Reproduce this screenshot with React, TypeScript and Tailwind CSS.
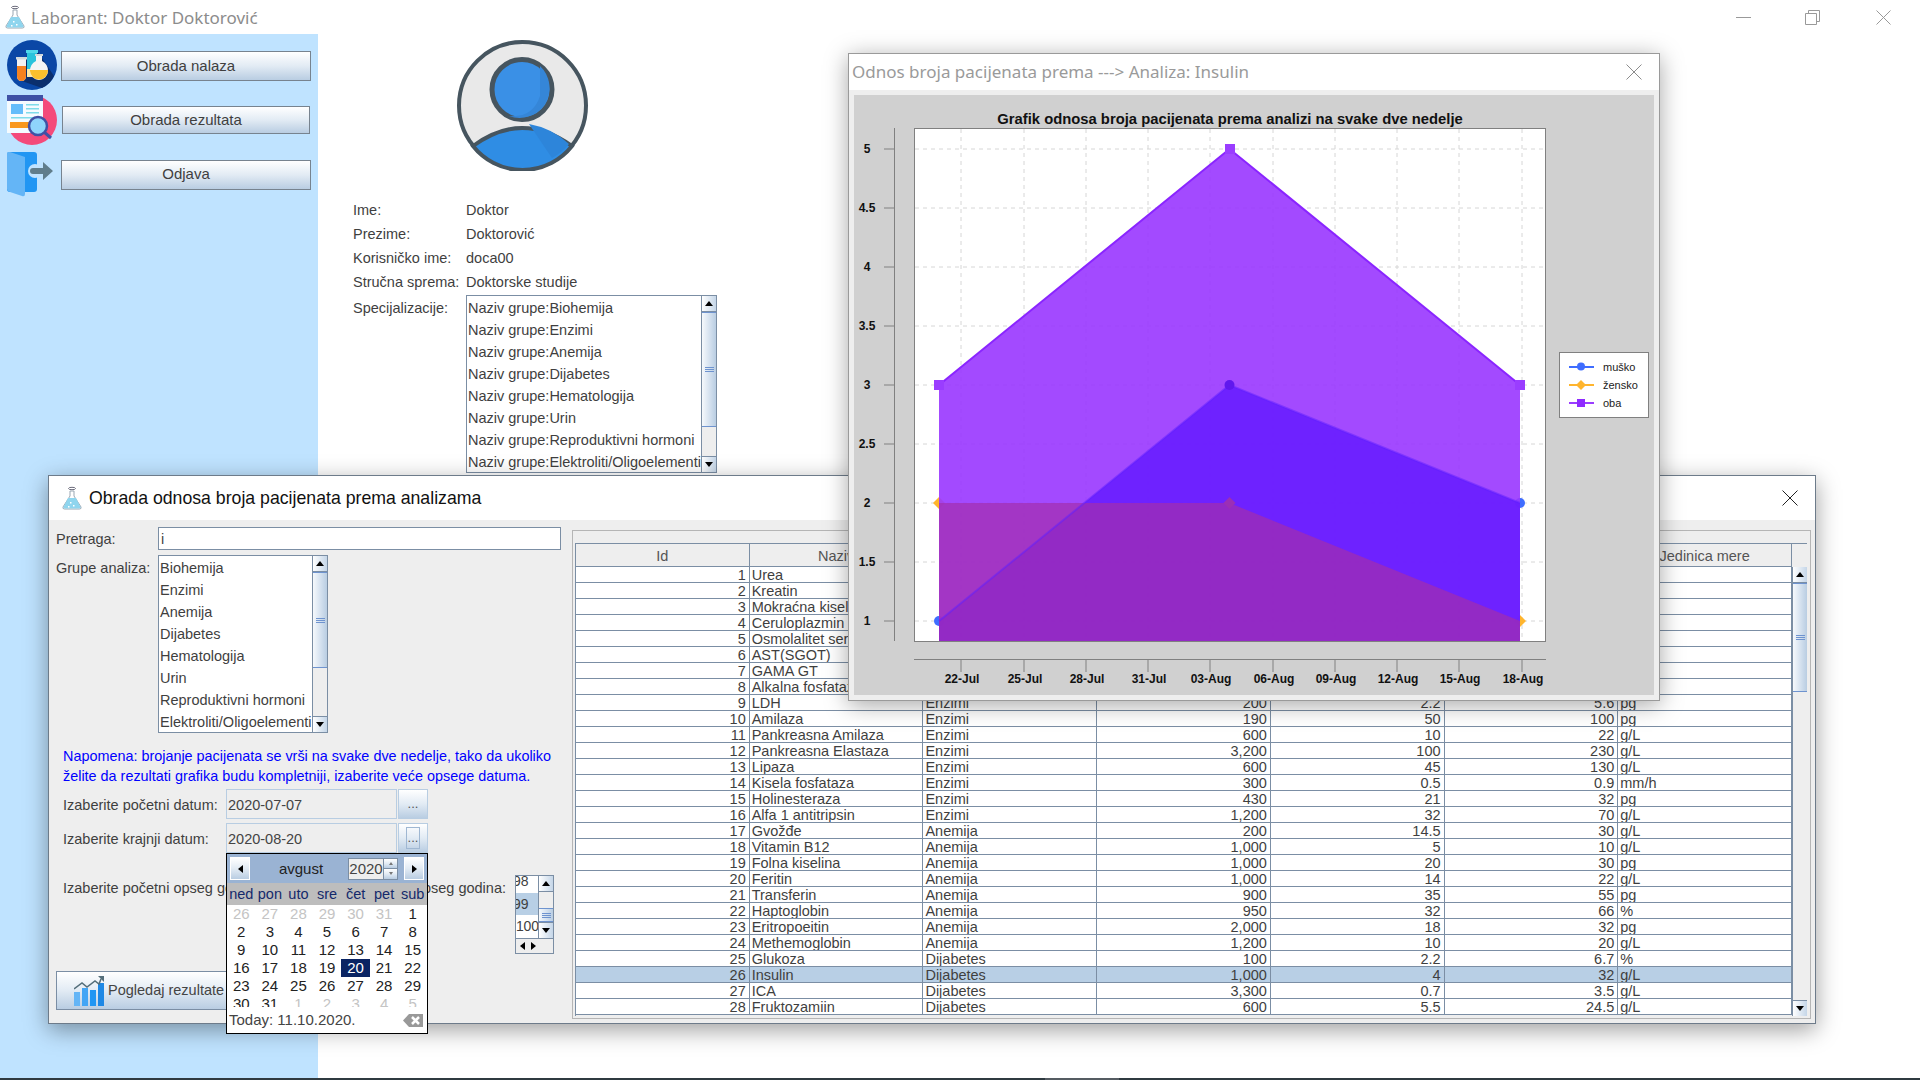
import React from "react"

const LINE = "border-[#7b8ea4]"
const BTN = "bg-gradient-to-b from-white via-[#e2ebf4] to-[#b9cde2]"

const FlaskIcon = () => (
  <svg width="20" height="24" viewBox="0 0 20 24" className="shrink-0">
    <ellipse cx="10" cy="2.5" rx="3.5" ry="1.2" fill="none" stroke="#6b6b7b" strokeWidth="1" />
    <path d="M8 5h4v5l7 11q.5 2-1.5 2h-15q-2 0-1.5-2l7-11z" fill="#fff" stroke="#9aa7b3" strokeWidth="1" />
    <path d="M6 12h8l4.500 9q.3 1.500-1 1.500h-15q-1.300 0-1-1.500z" fill="#8fd5ee" />
    <rect x="8" y="16" width="1.500" height="1.500" fill="#fff" />
    <rect x="11" y="19" width="1.500" height="1.500" fill="#fff" />
    <rect x="6" y="20" width="1.500" height="1.500" fill="#fff" />
  </svg>
)

const LabIcon = () => (
  <svg width="50" height="50" viewBox="0 0 50 50" className="shrink-0">
    <circle cx="25" cy="25" r="25" fill="#0a47a6" />
    <path d="M21 12l10 0 16 24a25 25 0 0 1-12 12L12 40z" fill="#0b2f6d" />
    <rect x="20" y="11" width="10" height="26" fill="#ffe9a6" />
    <rect x="20" y="11" width="10" height="18" fill="#29c3dc" />
    <rect x="19" y="10" width="12" height="3" fill="#4fd8ea" />
    <path d="M10 18h9v18q0 5-4.500 5t-4.500-5z" fill="#f2f2f2" />
    <path d="M10 26h9v10q0 5-4.500 5t-4.500-5z" fill="#f5821f" />
    <rect x="9" y="17" width="11" height="2.500" fill="#cfd8dc" />
    <path d="M29 15h6v6q6 3 6 10a9 9 0 0 1-18 0q0-7 6-10z" fill="#f4f4f4" />
    <path d="M23 30h18a9 9 0 0 1-18 1z" fill="#fbc02d" />
    <rect x="28" y="14" width="8" height="2" fill="#cfd8dc" />
  </svg>
)

const ReportIcon = () => (
  <svg width="50" height="50" viewBox="0 0 50 50" className="shrink-0">
    <circle cx="25" cy="25" r="25" fill="#f44a7a" />
    <rect x="0" y="0" width="36" height="38" fill="#f5fbff" />
    <rect x="0" y="0" width="36" height="6" fill="#3f51a5" />
    <rect x="4" y="9" width="12" height="10" fill="#64bdfb" />
    <path d="M19 9h13v1.500h-13zM19 13h13v1.500h-13zM19 17h13v1.500h-13zM4 22h28v1.500h-28z" fill="#7fdcea" />
    <rect x="3" y="27" width="19" height="6" fill="#f9971e" />
    <path d="M37 37l7 6" stroke="#3f51a5" strokeWidth="3" />
    <circle cx="31" cy="31" r="9" fill="#8fd4fb" stroke="#3f51a5" strokeWidth="2.500" />
  </svg>
)

const LogoutIcon = () => (
  <svg width="50" height="45" viewBox="0 0 50 45" className="shrink-0">
    <rect x="0" y="0" width="30" height="40" rx="3" fill="#2196f3" />
    <path d="M0 2q0-3 3-2l15 5v37q0 3-3 2l-12-4q-3-1-3-3z" fill="#64b5f6" />
    <circle cx="28" cy="19" r="7" fill="#bfe3ff" />
    <path d="M26 16h10v-6l10 9-10 9v-6h-10a3 3 0 0 1 0-6z" fill="#607d8b" />
  </svg>
)

const ChartIcon = () => (
  <svg width="30" height="31" viewBox="0 0 30 31" className="shrink-0">
    <rect x="0" y="17" width="6" height="14" fill="#64b5f6" />
    <rect x="8" y="13" width="6" height="18" fill="#42a5f5" />
    <rect x="16" y="15" width="6" height="16" fill="#2196f3" />
    <rect x="24" y="8" width="6" height="23" fill="#1e88e5" />
    <path d="M0 14l8-6 5 4 8-6 4 3 2-5" fill="none" stroke="#546e7a" strokeWidth="1.500" />
    <path d="M24 1h6v6z" fill="#546e7a" />
  </svg>
)

const Scrollbar = ({ thumbTop, thumbH }: { thumbTop: number; thumbH: number }) => (
  <div className={`flex flex-col h-full shrink-0 w-[15px] bg-[#eeeeee] border-l ${LINE}`}>
    <div className="h-[16px] shrink-0 flex items-center justify-center bg-gradient-to-r from-white to-[#c5d6e8] border-b border-[#7b8ea4]">
      <div className="w-0 h-0 border-x-[4px] border-x-transparent border-b-[5px] border-b-black" />
    </div>
    <div className="relative flex-1">
      <div
        className="absolute inset-x-0 flex flex-col items-center justify-center gap-[1px] bg-gradient-to-r from-[#f6f9fc] via-[#d7e3f0] to-[#b9cde2] border-y border-[#6e93cf]"
        style={{ top: thumbTop, height: thumbH }}
      >
        <div className="w-[9px] h-[1px] bg-[#6e93cf]" />
        <div className="w-[9px] h-[1px] bg-[#6e93cf]" />
        <div className="w-[9px] h-[1px] bg-[#6e93cf]" />
      </div>
    </div>
    <div className="h-[16px] shrink-0 flex items-center justify-center bg-gradient-to-r from-white to-[#c5d6e8] border-t border-[#7b8ea4]">
      <div className="w-0 h-0 border-x-[4px] border-x-transparent border-t-[5px] border-t-black" />
    </div>
  </div>
)

const ListBox = ({ items, className, thumbTop, thumbH }: { items: string[]; className: string; thumbTop: number; thumbH: number }) => (
  <div className={`flex border ${LINE} bg-white overflow-hidden ${className}`}>
    <div className="flex-1 min-w-0 overflow-hidden pl-[1px] pt-[1px]">
      {items.map((item) => (
        <div key={item} className="h-[22px] leading-[22px] whitespace-nowrap">
          {item}
        </div>
      ))}
    </div>
    <Scrollbar thumbTop={thumbTop} thumbH={thumbH} />
  </div>
)

const SideButton = ({ label, className }: { label: string; className: string }) => (
  <button className={`border border-[#77838f] ${BTN} text-[#3f3f3f] text-[15px] ${className}`}>{label}</button>
)

const groups = ["Biohemija", "Enzimi", "Anemija", "Dijabetes", "Hematologija", "Urin", "Reproduktivni hormoni", "Elektroliti/Oligoelementi"]

const Profile = () => (
  <div className="pl-[35px] pt-[6px]">
    <svg width="131" height="131" viewBox="0 0 131 131" className="ml-[104px]">
      <circle cx="65.500" cy="65.500" r="63.500" fill="#e9e9e9" stroke="#46555f" strokeWidth="4" />
      <path d="M16 106Q65 70 115 106A63 63 0 0 1 16 106Z" fill="#2f8de4" stroke="#46555f" strokeWidth="4" />
      <path d="M72 84Q95 88 112 104 A62 62 0 0 1 95 118z" fill="#2d85da" />
      <circle cx="65" cy="49.500" r="30" fill="#3a90e6" stroke="#46555f" strokeWidth="5" />
      <path d="M83 26a30 30 0 0 1-31 50q24 2 31-20z" fill="#3586d8" />
    </svg>
    <div className="mt-[27px] text-[14.5px] text-[#3f3f3f]">
      {[
        ["Ime:", "Doktor"],
        ["Prezime:", "Doktorović"],
        ["Korisničko ime:", "doca00"],
        ["Stručna sprema:", "Doktorske studije"],
      ].map(([label, value]) => (
        <div key={label} className="flex h-[24px] leading-[24px]">
          <span className="w-[113px] whitespace-nowrap">{label}</span>
          <span>{value}</span>
        </div>
      ))}
      <div className="flex mt-[1px]">
        <span className="w-[113px] pt-[2px] leading-[22px]">Specijalizacije:</span>
        <ListBox
          items={groups.map((g) => "Naziv grupe:" + g)}
          className="w-[251px] h-[178px]"
          thumbTop={0}
          thumbH={115}
        />
      </div>
    </div>
  </div>
)

const weekdays = ["ned", "pon", "uto", "sre", "čet", "pet", "sub"]
const days: [string, boolean][] = [
  ...["26", "27", "28", "29", "30", "31"].map((d): [string, boolean] => [d, true]),
  ...Array.from({ length: 31 }, (_, i): [string, boolean] => [String(i + 1), false]),
  ...["1", "2", "3", "4", "5"].map((d): [string, boolean] => [d, true]),
]

const Calendar = () => (
  <div className="absolute left-[177px] top-[333px] w-[202px] h-[181px] border border-black bg-white text-[15px] flex flex-col z-10">
    <div className="h-[29px] shrink-0 bg-[#9ab3d3] flex items-center pl-[3px] pr-[3px]">
      <div className={`w-[20px] h-[23px] flex items-center justify-center border border-white ${BTN}`}>
        <div className="w-0 h-0 border-y-[4px] border-y-transparent border-r-[5px] border-r-black" />
      </div>
      <div className="flex-1 text-center text-[#222] pl-[4px] pt-[1px]">avgust</div>
      <div className="w-[35px] h-[22px] border border-[#7b8ea4] bg-[#eeeeee] text-[#444] text-center leading-[20px] border-r-0">2020</div>
      <div className="w-[15px] h-[22px] flex flex-col border border-[#7b8ea4] mr-[6px]">
        <div className={`flex-1 flex items-center justify-center ${BTN} border-b border-[#7b8ea4]`}>
          <div className="w-0 h-0 border-x-[2px] border-x-transparent border-b-[3px] border-b-[#777]" />
        </div>
        <div className={`flex-1 flex items-center justify-center ${BTN}`}>
          <div className="w-0 h-0 border-x-[2px] border-x-transparent border-t-[3px] border-t-[#777]" />
        </div>
      </div>
      <div className={`w-[20px] h-[23px] flex items-center justify-center border border-white ${BTN}`}>
        <div className="w-0 h-0 border-y-[4px] border-y-transparent border-l-[5px] border-l-black" />
      </div>
    </div>
    <div className="h-[22px] shrink-0 bg-[#bdbdbd] grid grid-cols-7 text-center text-[#14296b] text-[14.5px] leading-[23px]">
      {weekdays.map((w) => (
        <span key={w}>{w}</span>
      ))}
    </div>
    <div className="h-[102px] shrink-0 overflow-hidden grid grid-cols-7 auto-rows-[18px] text-center leading-[18px]">
      {days.map(([d, muted], i) => (
        <span
          key={i}
          className={d === "20" ? "bg-[#0a2463] text-white" : muted ? "text-[#c4c4c4]" : "text-[#222]"}
        >
          {d}
        </span>
      ))}
    </div>
    <div className="flex-1 flex items-center justify-between pl-[2px] pr-[4px] text-[#444]">
      <span>Today: 11.10.2020.</span>
      <svg width="20" height="13" viewBox="0 0 20 13">
        <path d="M0 6.500L6 0h14v13H6z" fill="#999" />
        <path d="M9 3l7 7M16 3l-7 7" stroke="#fff" strokeWidth="2.500" />
      </svg>
    </div>
  </div>
)

const DateRow = ({ label, value, focused, className }: { label: string; value: string; focused?: boolean; className: string }) => (
  <div className={`flex h-[30px] items-center ${className}`}>
    <span className="w-[163px] whitespace-nowrap pt-[4px]">{label}</span>
    <div className="w-[171px] h-full border border-[#b8cde2] pl-[1px] leading-[30px] text-[#444]">{value}</div>
    <div className={`ml-[1px] w-[30px] h-full flex items-center justify-center border border-[#b8cde2] ${BTN} text-[#555] text-[13px] leading-[24px]`}>
      {focused ? <div className="w-[14px] h-[22px] border border-[#9fb7d2] text-center leading-[20px]">...</div> : "..."}
    </div>
  </div>
)

const ObradaForm = () => (
  <div className="w-[523px] shrink-0 pt-[7px] text-[14.5px] text-[#3f3f3f]">
    <div className="flex pl-[7px] h-[23px] items-center">
      <span className="w-[102px] pt-[2px]">Pretraga:</span>
      <div className={`w-[403px] h-full bg-white border ${LINE} pl-[2px] leading-[23px]`}>i</div>
    </div>
    <div className="flex pl-[7px] mt-[5px]">
      <span className="w-[102px] leading-[27px]">Grupe analiza:</span>
      <ListBox items={groups} className="w-[170px] h-[178px]" thumbTop={0} thumbH={96} />
    </div>
    <p className="pl-[14px] mt-[13px] text-[#0000ff] leading-[20px] whitespace-nowrap text-[14.4px]">
      Napomena: brojanje pacijenata se vrši na svake dve nedelje, tako da ukoliko
      <br />
      želite da rezultati grafika budu kompletniji, izaberite veće opsege datuma.
    </p>
    <div className="pl-[14px]">
      <DateRow className="mt-[3px]" label="Izaberite početni datum:" value="2020-07-07" />
      <DateRow className="mt-[4px]" label="Izaberite krajnji datum:" value="2020-08-20" focused />
      <div className="flex mt-[22px] h-[79px] w-[491px]">
        <span className="leading-[26px] whitespace-nowrap">Izaberite početni opseg godina:</span>
        <span className="ml-auto mr-[9px] leading-[26px] whitespace-nowrap">Izaberite krajnji opseg godina:</span>
        <div className={`w-[39px] h-full border ${LINE} bg-white flex flex-col`}>
          <div className="flex-1 flex min-h-0">
            <div className="flex-1 overflow-hidden text-[14px]">
              <div className="h-[17px] leading-[11px] -ml-[3px]">98</div>
              <div className="h-[22px] leading-[22px] bg-[#b8cfe5] -ml-[3px]">99</div>
              <div className="h-[22px] leading-[22px] -tracking-[0.2px]">100</div>
            </div>
            <Scrollbar thumbTop={16} thumbH={14} />
          </div>
          <div className={`h-[15px] shrink-0 border-t ${LINE} flex items-center bg-[#eeeeee]`}>
            <div className="w-[11px] flex justify-center ml-[1px]">
              <div className="w-0 h-0 border-y-[4px] border-y-transparent border-r-[5px] border-r-black" />
            </div>
            <div className="w-[11px] flex justify-center">
              <div className="w-0 h-0 border-y-[4px] border-y-transparent border-l-[5px] border-l-black" />
            </div>
          </div>
        </div>
      </div>
    </div>
    <div className="pl-[7px] mt-[17px]">
      <button className={`w-[190px] h-[39px] flex items-center gap-[4px] pl-[17px] border ${LINE} ${BTN} text-[#444] whitespace-nowrap`}>
        <ChartIcon />
        Pogledaj rezultate
      </button>
    </div>
  </div>
)

type Row = [string, string, string, string, string, string]
const rows: Row[] = [
  ["Urea", "", "", "", "", ""],
  ["Kreatin", "", "", "", "", ""],
  ["Mokraćna kiselina", "", "", "", "", ""],
  ["Ceruloplazmin", "", "", "", "", ""],
  ["Osmolalitet seruma", "", "", "", "", ""],
  ["AST(SGOT)", "", "", "", "", ""],
  ["GAMA GT", "", "", "", "", ""],
  ["Alkalna fosfataza", "", "", "", "", ""],
  ["LDH", "Enzimi", "200", "2.2", "5.6", "pg"],
  ["Amilaza", "Enzimi", "190", "50", "100", "pg"],
  ["Pankreasna Amilaza", "Enzimi", "600", "10", "22", "g/L"],
  ["Pankreasna Elastaza", "Enzimi", "3,200", "100", "230", "g/L"],
  ["Lipaza", "Enzimi", "600", "45", "130", "g/L"],
  ["Kisela fosfataza", "Enzimi", "300", "0.5", "0.9", "mm/h"],
  ["Holinesteraza", "Enzimi", "430", "21", "32", "pg"],
  ["Alfa 1 antitripsin", "Enzimi", "1,200", "32", "70", "g/L"],
  ["Gvožđe", "Anemija", "200", "14.5", "30", "g/L"],
  ["Vitamin B12", "Anemija", "1,000", "5", "10", "g/L"],
  ["Folna kiselina", "Anemija", "1,000", "20", "30", "pg"],
  ["Feritin", "Anemija", "1,000", "14", "22", "g/L"],
  ["Transferin", "Anemija", "900", "35", "55", "pg"],
  ["Haptoglobin", "Anemija", "950", "32", "66", "%"],
  ["Eritropoeitin", "Anemija", "2,000", "18", "32", "pg"],
  ["Methemoglobin", "Anemija", "1,200", "10", "20", "g/L"],
  ["Glukoza", "Dijabetes", "100", "2.2", "6.7", "%"],
  ["Insulin", "Dijabetes", "1,000", "4", "32", "g/L"],
  ["ICA", "Dijabetes", "3,300", "0.7", "3.5", "g/L"],
  ["Fruktozamiin", "Dijabetes", "600", "5.5", "24.5", "g/L"],
]

const headers = ["Id", "Naziv", "Grupa", "Cena", "Min", "Max", "Jedinica mere"]
const leftAligned = [1, 2, 6]

const AnalysisTable = () => (
  <div className="mt-[10px] w-[1239px] h-[489px] border border-[#b5b5b5] pl-[2px] pt-[12px] text-[14.5px] text-[#3f3f3f]">
    <div className={`flex w-[1232px] h-[473px] border-l ${LINE}`}>
      <div className="w-[1216px] shrink-0">
        <div className={`grid grid-cols-7 h-[24px] border-y ${LINE} bg-[#eeeeee]`}>
          {headers.map((h) => (
            <div key={h} className={`text-center leading-[24px] border-r ${LINE} text-[#555]`}>
              {h}
            </div>
          ))}
        </div>
        {rows.map((row, i) => (
          <div
            key={i}
            className={`grid grid-cols-7 h-[16px] border-b ${LINE} ${i === 25 ? "bg-[#b8cfe5]" : "bg-white"}`}
          >
            {[String(i + 1), ...row].map((cell, c) => (
              <div
                key={c}
                className={`h-[15px] overflow-hidden whitespace-nowrap leading-[16px] border-r ${LINE} ${
                  leftAligned.includes(c) ? "pl-[2px]" : "text-right pr-[3px]"
                }`}
              >
                {cell}
              </div>
            ))}
          </div>
        ))}
      </div>
      <div className={`w-[15px] h-[473px] flex flex-col border-t ${LINE}`}>
        <div className="h-[23px] shrink-0 bg-[#eeeeee]" />
        <div className="flex-1 min-h-0">
          <Scrollbar thumbTop={0} thumbH={109} />
        </div>
      </div>
    </div>
  </div>
)

const yTicks: [string, number][] = [
  ["5", 149], ["4.5", 208], ["4", 267], ["3.5", 326], ["3", 385], ["2.5", 444], ["2", 503], ["1.5", 562], ["1", 621],
]
const xTicks: [string, number][] = [
  ["22-Jul", 961], ["25-Jul", 1024], ["28-Jul", 1086], ["31-Jul", 1148], ["03-Aug", 1210],
  ["06-Aug", 1273], ["09-Aug", 1335], ["12-Aug", 1397], ["15-Aug", 1459], ["18-Aug", 1522],
]

const ChartGraphic = () => (
  <svg width="800" height="600" viewBox="854 95 800 600" className="block font-['Liberation_Sans',sans-serif]">
    <rect x="854" y="95" width="800" height="600" fill="#d0d0d0" />
    <text x="1230" y="124" textAnchor="middle" fontWeight="700" fontSize="14.800" fill="#111">
      Grafik odnosa broja pacijenata prema analizi na svake dve nedelje
    </text>
    <rect x="914.500" y="128.500" width="631" height="513" fill="#fff" stroke="#808080" />
    {yTicks.map(([label, y]) => (
      <g key={label}>
        <line x1="915" x2="1545" y1={y} y2={y} stroke="#d6d6d6" strokeDasharray="4 4" />
        <line x1="884" x2="894" y1={y} y2={y} stroke="#808080" />
        <text x="867" y={y + 4} textAnchor="middle" fontWeight="700" fontSize="12" fill="#111">
          {label}
        </text>
      </g>
    ))}
    {xTicks.map(([label, x]) => (
      <g key={label}>
        <line x1={x} x2={x} y1="129" y2="641" stroke="#d6d6d6" strokeDasharray="4 4" />
        <line x1={x} x2={x} y1="660" y2="672" stroke="#808080" />
        <text x={x + 1} y="683" textAnchor="middle" fontWeight="700" fontSize="12" fill="#111">
          {label}
        </text>
      </g>
    ))}
    <line x1="894.500" x2="894.500" y1="128" y2="641" stroke="#808080" />
    <line x1="914" x2="1546" y1="659.500" y2="659.500" stroke="#808080" />
    <circle cx="939" cy="621" r="5" fill="#3f6dff" />
    <circle cx="1520" cy="503" r="5" fill="#3f6dff" />
    <path d="M939 497l6 6-6 6-6-6z" fill="#ffb52e" />
    <path d="M1520 615l6 6-6 6-6-6z" fill="#ffb52e" />
    <polygon points="939,641 939,385 1229.500,149 1520,385 1520,641" fill="rgb(153,54,255)" fillOpacity="0.9" />
    <polygon points="939,641 939,621 1229.500,385 1520,503 1520,641" fill="rgb(101,27,255)" fillOpacity="0.85" />
    <polygon points="939,641 939,503 1229.500,503 1520,621 1520,641" fill="rgb(163,45,172)" fillOpacity="0.7" />
    <polyline points="939,385 1229.500,149 1520,385" fill="none" stroke="#8a25ff" strokeWidth="2" />
    <polyline points="939,621 1229.500,385 1520,503" fill="none" stroke="#5f1fff" strokeOpacity="0.5" strokeWidth="2" />
    <rect x="934" y="380" width="10" height="10" fill="#9a3dff" />
    <rect x="1225" y="144" width="10" height="10" fill="#9a3dff" />
    <rect x="1515" y="380" width="10" height="10" fill="#9a3dff" />
    <circle cx="1229.500" cy="385" r="5" fill="#6118ee" />
    <path d="M1229.500 497l6 6-6 6-6-6z" fill="#9b2fb5" />
    <rect x="1559.500" y="352.500" width="89" height="65" fill="#fff" stroke="#808080" />
    <line x1="1569" x2="1594" y1="367" y2="367" stroke="#3f6dff" strokeWidth="2" />
    <circle cx="1581" cy="366.500" r="4" fill="#3f6dff" />
    <line x1="1569" x2="1594" y1="385" y2="385" stroke="#ffb52e" strokeWidth="2" />
    <path d="M1581 380l5 5-5 5-5-5z" fill="#ffb52e" />
    <line x1="1569" x2="1594" y1="403" y2="403" stroke="#9a3dff" strokeWidth="2" />
    <rect x="1577" y="399" width="8" height="8" fill="#8f2bff" />
    <g fontSize="11" fill="#222">
      <text x="1603" y="371">muško</text>
      <text x="1603" y="389">žensko</text>
      <text x="1603" y="407">oba</text>
    </g>
  </svg>
)

const ChartWindow = () => (
  <div className="absolute left-[848px] top-[53px] w-[812px] h-[648px] border border-[#9a9a9a] bg-[#eeeeee] shadow-[0_4px_22px_rgba(0,0,0,0.35)] flex flex-col z-20">
    <div className="h-[36px] shrink-0 bg-white flex items-center pl-[3px] pr-[17px] justify-between">
      <span className="text-[17px] text-[#9a9a9a] font-['Noto_Sans',sans-serif]">Odnos broja pacijenata prema ---&gt; Analiza: Insulin</span>
      <svg width="16" height="16" viewBox="0 0 16 16">
        <path d="M.5.5l15 15M15.500.5l-15 15" stroke="#8c8c8c" />
      </svg>
    </div>
    <div className="pl-[5px] pt-[5px]">
      <ChartGraphic />
    </div>
  </div>
)

const ObradaDialog = () => (
  <div className="absolute left-[48px] top-[475px] w-[1768px] h-[549px] border border-[#6d7b8a] bg-[#eeeeee] shadow-[0_6px_22px_rgba(0,0,0,0.38)] flex flex-col">
    <div className="h-[44px] shrink-0 bg-white flex items-center pl-[13px] pr-[17px] gap-[7px]">
      <FlaskIcon />
      <span className="flex-1 text-[17.7px] text-[#111] pt-[1px]">Obrada odnosa broja pacijenata prema analizama</span>
      <svg width="16" height="16" viewBox="0 0 16 16">
        <path d="M.5.5l15 15M15.500.5l-15 15" stroke="#222" />
      </svg>
    </div>
    <div className="relative flex flex-1 min-h-0">
      <ObradaForm />
      <AnalysisTable />
      <Calendar />
    </div>
  </div>
)

const App = () => {
  return (
    <div className="relative w-[1920px] h-[1080px] overflow-hidden bg-white flex flex-col font-['Liberation_Sans',Arial,sans-serif]">
      <div className="h-[34px] shrink-0 flex items-center pl-[5px] pr-[29px]">
        <FlaskIcon />
        <span className="ml-[6px] flex-1 text-[17px] text-[#8c8c8c] font-['Noto_Sans',sans-serif] pt-[1px]">Laborant: Doktor Doktorović</span>
        <div className="w-[15px] h-[1px] bg-[#999]" />
        <svg width="15" height="15" viewBox="0 0 15 15" className="ml-[54px]">
          <path d="M3.500 3V.5h11v11H12M.5 3.500h11v11H.5z" fill="none" stroke="#999" />
        </svg>
        <svg width="15" height="15" viewBox="0 0 15 15" className="ml-[56px]">
          <path d="M.5.5l14 14M14.500.5l-14 14" stroke="#999" />
        </svg>
      </div>
      <div className="flex flex-1 min-h-0">
        <aside className="w-[318px] shrink-0 bg-[#bfe3ff] pl-[7px] pt-[6px]">
          <div className="flex items-center gap-[4px] h-[50px]">
            <LabIcon />
            <SideButton label="Obrada nalaza" className="w-[250px] h-[30px] mt-[2px]" />
          </div>
          <div className="flex items-center gap-[5px] h-[50px] mt-[5px]">
            <ReportIcon />
            <SideButton label="Obrada rezultata" className="w-[248px] h-[28px]" />
          </div>
          <div className="flex items-center gap-[4px] h-[45px] mt-[7px]">
            <LogoutIcon />
            <SideButton label="Odjava" className="w-[250px] h-[30px]" />
          </div>
        </aside>
        <Profile />
      </div>
      <div className="h-[2px] shrink-0 flex bg-[#2f3a40]">
        <div className="ml-[1045px] w-[74px] bg-[#555c62]" />
      </div>
      <ObradaDialog />
      <ChartWindow />
    </div>
  )
}

export default App
